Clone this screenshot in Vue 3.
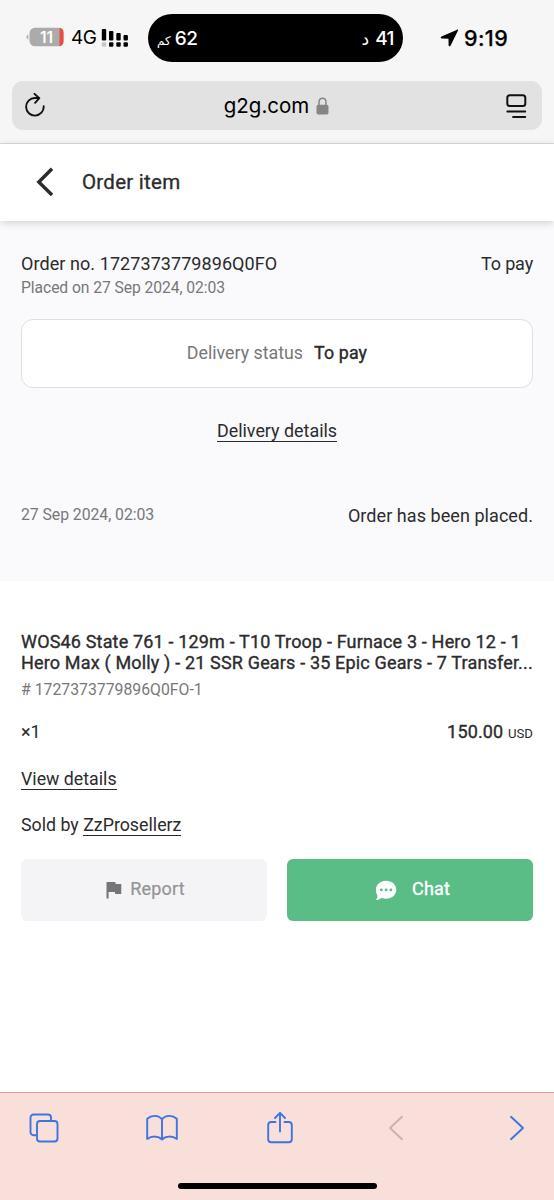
<script setup>
const order = {
  number: '1727373779896Q0FO',
  placed: '27 Sep 2024, 02:03',
  status: 'To pay',
  title: 'WOS46 State 761 - 129m - T10 Troop - Furnace 3 - Hero 12 - 1 Hero Max ( Molly ) - 21 SSR Gears - 35 Epic Gears - 7 Transfer...',
  price: '150.00',
  seller: 'ZzProsellerz',
}
</script>

<template>
  <div class="screen">
    <div class="browser-top">
      <div class="status">
        <div class="status-left">
          <svg class="battery" width="38" height="20" viewBox="0 0 38 20">
            <path d="M2.300 7.500v5C.9 12.100.4 11.200.4 10s.5-2.100 1.900-2.500z" fill="#b3b3b3" />
            <rect x="3.500" y=".7" width="34" height="18.600" rx="5.500" fill="#ababab" />
            <path d="M33.500.7c2.700.3 4 2.300 4 5v8.600c0 2.700-1.300 4.700-4 5z" fill="#ee4b43" />
            <text x="20.500" y="15.600" text-anchor="middle" class="battery-text">11</text>
          </svg>
          <span class="network">4G</span>
          <svg class="bars" width="28" height="20" viewBox="0 0 28 20">
            <g fill="#000">
              <rect x=".8" y="1" width="4.400" height="11.500" rx="1" />
              <rect x="8" y="3" width="4.400" height="9.500" rx="1" />
              <rect x="15.300" y="5" width="4.400" height="7.500" rx="1" />
              <rect x="22.500" y="7" width="4.400" height="5.500" rx="1" />
              <rect x="8" y="14.300" width="4.400" height="4.400" rx="1" />
              <rect x="15.300" y="14.300" width="4.400" height="4.400" rx="1" />
              <rect x="22.500" y="14.300" width="4.400" height="4.400" rx="1" />
            </g>
            <rect x=".8" y="14.300" width="4.400" height="4.400" rx="1" fill="#c7c7c7" />
          </svg>
        </div>
        <div class="island">
          <span class="trip"><small>كم</small><span>62</span></span>
          <span class="trip eta"><b>د</b><span>41</span></span>
        </div>
        <div class="status-right">
          <svg width="19" height="18" viewBox="0 0 19 18">
            <path d="M17.200.7 1.500 7.600c-1.300.6-.9 2 .3 2l6.700.1.1 6.400c0 1.400 1.400 1.700 2 .4L18 1.600c.3-.7-.1-1.200-.8-.9z" fill="#000" />
          </svg>
          <span class="clock">9:19</span>
        </div>
      </div>
      <div class="address">
        <svg width="22" height="26" viewBox="0 0 22 26" fill="none" stroke="#111" stroke-width="1.900" stroke-linecap="round" stroke-linejoin="round">
          <path d="M19.700 13.300A8.800 8.800 0 1 1 10.900 5h4.400M10.500.9l4.800 4.300-4.200 4.600" />
        </svg>
        <div class="host">
          <span>g2g.com</span>
          <svg width="13" height="18" viewBox="0 0 13 18">
            <path d="M3 9V5.200C3 2.800 4.400 1.200 6.500 1.200S10 2.800 10 5.200V9" fill="none" stroke="#858585" stroke-width="1.500" />
            <rect x=".5" y="7.700" width="12" height="9.700" rx="1.700" fill="#858585" />
          </svg>
        </div>
        <svg width="22" height="26" viewBox="0 0 22 26" fill="none" stroke="#111" stroke-width="2" stroke-linecap="round">
          <rect x="2.300" y="2.300" width="18" height="10.700" rx="2.500" />
          <path d="M2.300 18.500h18M8 24h12.300" stroke-width="1.800" />
        </svg>
      </div>
    </div>

    <header class="header">
      <svg width="18" height="30" viewBox="0 0 18 30">
        <path d="M17 1.800 3.800 15 17 28" fill="none" stroke="#2b2b2b" stroke-width="3.400" />
      </svg>
      <h1>Order item</h1>
    </header>

    <section class="summary">
      <div class="row order-row">
        <span class="order-no">Order no. {{ order.number }}</span>
        <span class="order-state">{{ order.status }}</span>
      </div>
      <div class="placed">Placed on {{ order.placed }}</div>
      <div class="delivery">
        <span class="muted">Delivery status</span>
        <strong>{{ order.status }}</strong>
      </div>
      <div class="details"><a class="link">Delivery details</a></div>
      <div class="row event">
        <span class="event-date">{{ order.placed }}</span>
        <span class="event-text">Order has been placed.</span>
      </div>
    </section>

    <main class="item">
      <h2>{{ order.title }}</h2>
      <div class="item-id"># {{ order.number }}-1</div>
      <div class="row price-row">
        <span class="qty">×1</span>
        <span class="price">{{ order.price }} <small>USD</small></span>
      </div>
      <div class="view"><a class="link">View details</a></div>
      <div class="sold">Sold by <a class="link">{{ order.seller }}</a></div>
      <div class="actions">
        <button class="btn report">
          <svg width="16" height="18" viewBox="0 0 16 18">
            <path d="M.5 1h8.800l.4 2H15.300v10H9.300l-.5-2H2.600v6.500H.5z" fill="#767678" />
          </svg>
          <span>Report</span>
        </button>
        <button class="btn chat">
          <svg width="22" height="21" viewBox="0 0 22 21">
            <path d="M11.100.7c5.700 0 10.200 3.900 10.200 9s-4.500 9-10.200 9c-1.700 0-3.200-.3-4.600-1-1.600 1.500-3.600 2.300-5.600 2.300 1-1.300 1.600-2.700 1.600-4.600C1.500 13.900.9 12 .9 9.700c0-5.100 4.500-9 10.200-9z" fill="#fff" />
            <g fill="#5bbd86"><circle cx="6.300" cy="9.900" r="1.450" /><circle cx="11.100" cy="9.900" r="1.450" /><circle cx="15.900" cy="9.900" r="1.450" /></g>
          </svg>
          <span>Chat</span>
        </button>
      </div>
    </main>

    <footer class="toolbar">
      <nav class="tools">
        <svg width="30" height="32" viewBox="0 0 30 32">
          <path d="M7 23.300H4.500a3 3 0 0 1-3-3V5.500a3 3 0 0 1 3-3h14.500a3 3 0 0 1 3 3V8" />
          <rect x="8" y="9" width="20.500" height="20.500" rx="3" />
        </svg>
        <svg width="32" height="32" viewBox="0 0 32 32">
          <path d="M16 7.200C12.500 2.800 5.500 2.800 1.200 6.700v20.200c4.500-3.200 11-3.200 14.800.6 3.800-3.800 10.300-3.800 14.800-.6V6.700C26.500 2.800 19.500 2.800 16 7.200zM16 7.200v20.300" />
        </svg>
        <svg width="26" height="34" viewBox="0 0 26 34">
          <path d="M8.500 11H4.200a3 3 0 0 0-3 3v14.300a3 3 0 0 0 3 3h17.600a3 3 0 0 0 3-3V14a3 3 0 0 0-3-3h-4.300M13 20.500V2M8 7l5-5.200L18 7" />
        </svg>
        <svg class="disabled" width="16" height="28" viewBox="0 0 16 28"><path d="M14 2.800 2 14l12 11.200" /></svg>
        <svg class="forward" width="16" height="28" viewBox="0 0 16 28"><path d="M2 2.800 14 14 2 25.200" /></svg>
      </nav>
      <div class="home-bar"></div>
    </footer>
  </div>
</template>

<style>
body { margin: 0; background: #fff; }
</style>

<style scoped>
* { box-sizing: border-box; }
.screen { width: 554px; height: 1200px; display: flex; flex-direction: column; background: #fff; color: #2b2b2d; font-family: Roboto, "Noto Sans", sans-serif; overflow: hidden; }
svg { display: block; flex: none; }
.browser-top { height: 144px; flex: none; background: #f6f6f6; border-bottom: 1px solid #dadada; padding: 14px 12px 0; font-family: Inter, "Noto Sans", sans-serif; color: #000; }
.status { display: grid; grid-template-columns: 136px 255px 1fr; height: 48px; align-items: center; }
.status-left { display: flex; align-items: center; padding-left: 14px; }
.battery { margin-top: -2px; }
.battery-text { font: 600 15.500px Inter, sans-serif; fill: #fff; }
.network { font-size: 19px; line-height: 24px; width: 25px; margin-left: 7px; letter-spacing: -.5px; white-space: nowrap; }
.bars { margin: -1px 0 0 5px; }
.island { height: 48px; border-radius: 24px; background: #000; color: #fff; display: flex; justify-content: space-between; align-items: center; padding: 0 9px; font-size: 19px; font-weight: 500; }
.trip { display: flex; align-items: center; gap: 4px; line-height: 24px; padding-top: 1px; }
.trip > span { letter-spacing: -.5px; }
.trip small { font: 400 12px/20px "DejaVu Sans", sans-serif; padding-top: 4px; }
.trip b { font: 400 17px/20px "DejaVu Sans", sans-serif; }
.eta { gap: 6px; }
.status-right { display: flex; align-items: center; padding-left: 37px; }
.clock { margin-left: 5px; font-size: 21.500px; font-weight: 500; line-height: 24px; letter-spacing: .4px; -webkit-text-stroke: .25px #000; }
.address { margin-top: 19px; height: 49px; border-radius: 11px; background: #e2e2e2; display: flex; align-items: center; justify-content: space-between; padding: 0 15px 0 12px; }
.host { display: flex; align-items: center; gap: 7px; font-size: 20.500px; line-height: 26px; padding-left: 2px; }
.header { height: 77px; flex: none; display: flex; align-items: center; padding: 0 35px 2px; background: #fff; box-shadow: 0 2px 8px rgba(0, 0, 0, .16); position: relative; z-index: 1; }
h1 { margin: 0 0 0 29px; font-size: 20.500px; line-height: 28px; font-weight: 400; letter-spacing: .25px; -webkit-text-stroke: .3px #2b2b2d; }
.summary { height: 360px; flex: none; background: #fafafc; padding: 31px 21px 0; }
.row { display: flex; justify-content: space-between; }
.order-row { font-size: 18px; line-height: 24px; }
.order-no { letter-spacing: .07px; }
.order-state { letter-spacing: -.15px; }
.placed { font-size: 15.700px; line-height: 24px; color: #77777a; letter-spacing: -.08px; }
.delivery { margin-top: 19px; height: 69px; border: 1px solid #dfdfe1; border-radius: 12px; background: #fff; display: flex; align-items: center; justify-content: center; gap: 11px; font-size: 17.800px; padding-bottom: 3px; }
.muted { color: #77777a; }
strong { font-weight: 400; -webkit-text-stroke: .4px #2b2b2d; letter-spacing: .15px; }
.details { margin-top: 31px; height: 25px; text-align: center; font-size: 17.900px; line-height: 24px; }
.link { display: inline-block; height: 23px; line-height: 24px; border-bottom: 1px solid #2b2b2d; }
.event { margin-top: 57px; line-height: 28px; }
.event-date { font-size: 15.800px; color: #77777a; line-height: 28px; letter-spacing: -.05px; }
.event-text { font-size: 18px; line-height: 30px; letter-spacing: .06px; }
.item { flex: 1; padding: 50px 21px 0; }
h2 { margin: 0; font-size: 18px; line-height: 21px; font-weight: 400; width: 518px; letter-spacing: .165px; -webkit-text-stroke: .35px #2b2b2d; }
.item-id { margin-top: 5px; font-size: 15.800px; line-height: 24px; color: #77777a; }
.price-row { margin-top: 18px; font-size: 18px; line-height: 24px; }
.price { font-weight: 400; -webkit-text-stroke: .35px #2b2b2d; letter-spacing: .15px; }
.price small { font-size: 13.200px; -webkit-text-stroke: 0; letter-spacing: 0; }
.view { margin-top: 21px; height: 24px; font-size: 17.800px; line-height: 24px; }
.sold { margin-top: 22px; height: 24px; font-size: 17.800px; line-height: 24px; }
.actions { margin-top: 22px; display: grid; grid-template-columns: 246px 246px; gap: 20px; }
.btn { height: 62px; border: 0; border-radius: 6px; display: flex; align-items: center; justify-content: center; font: 400 18px/24px Roboto, sans-serif; padding: 0; }
.btn span { padding-bottom: 3px; letter-spacing: .15px; }
.report { background: #f4f4f6; color: #939395; gap: 8px; padding-left: 3px; -webkit-text-stroke: .2px #939395; }
.chat { background: #5bbd86; color: #fff; gap: 15px; padding-left: 5px; -webkit-text-stroke: .35px #fff; }
.toolbar { height: 108px; flex: none; background: #f9dfda; border-top: 1px solid #e99b97; }
.tools { height: 70px; display: grid; grid-template-columns: 117px 119px 109px 120px 16px; align-items: center; padding-left: 29px; }
.tools svg { fill: none; stroke: #3e74e0; stroke-width: 1.900; stroke-linecap: round; stroke-linejoin: round; }
.tools svg.disabled { stroke: #cbb0ad; margin-left: 14px; }
.tools svg:nth-child(3) { margin-left: 2px; }
.tools svg.forward { margin-left: 15px; }
.home-bar { width: 199px; height: 6px; margin: 20px auto 0; border-radius: 3px; background: #000; }
</style>
